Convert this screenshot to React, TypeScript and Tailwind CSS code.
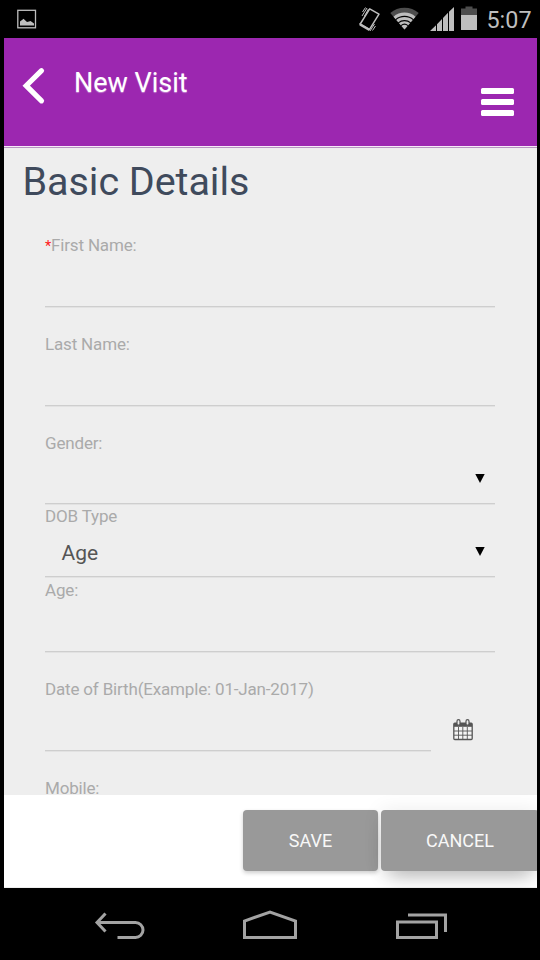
import type { ReactNode } from "react";

function StatusBar() {
  return (
    <div className="flex h-[38px] w-full bg-black">
      <svg width="540" height="38" viewBox="0 0 540 38" fill="#bebebe">
        <rect x="17.800" y="10.300" width="17.700" height="17.500" fill="none" stroke="#bebebe" strokeWidth="1.300" />
        <path d="M20 25.500V21.500l2-1.500 1.500-1.200 3.500 3.200 2-.5 1.500-.5 3.500 2.500v2z" />
        <path d="M369.700 8.800L379 14.200L369.500 29.400L360.200 24z" fill="none" stroke="#bebebe" strokeWidth="1.500" strokeLinejoin="round" />
        <path d="M359.500 23L370 29L369 31L359.500 25.500z" />
        <path d="M362 16l5-8M364.500 16l4-7M362.500 12l3-4.500M370 31l4.500-7M372.500 30.500l3-4.500" stroke="#bebebe" strokeWidth="1" />
        <path d="M390.300 13a21.500 21.500 0 0 1 28.400 0L404.500 29.500z" fill="#4d4d4d" />
        <path d="M393.500 16.800a16.500 16.500 0 0 1 22 0L404.500 29.500z" />
        <path d="M395.500 19.800a13.500 13.500 0 0 1 18 0M398.300 22.900a9.500 9.500 0 0 1 12.400 0M401 25.600a5.500 5.500 0 0 1 7 0" fill="none" stroke="#000" strokeWidth="1.100" />
        <path d="M430 31L436 25.200V31zM437 24.200L442 19V31H437zM443 18l5-5.200V31h-5zM449 11.800L454 7V31h-5z" />
        <path d="M461 8.500h4.500V6.500h7v2H477V15H461z" fill="#4d4d4d" />
        <path d="M461 15h16v15H461z" />
        <text x="486.500" y="28" fontFamily="Roboto, sans-serif" fontSize="24" textLength="45" lengthAdjust="spacingAndGlyphs">5:07</text>
      </svg>
    </div>
  );
}

function Header() {
  return (
    <header className="flex h-[110px] shrink-0 flex-col bg-[#9c27b0]">
      <div className="flex h-[108px]">
        <svg className="mt-[29px] ml-[18px] shrink-0" width="24" height="38" viewBox="0 0 24 38" fill="none" stroke="#fff" strokeWidth="5.200" strokeLinecap="round">
          <path d="M19.500 3.700L4.200 18.700L19.500 33.800" />
        </svg>
        <h1 className="mt-[26.500px] ml-[28px] h-9 text-[27px] leading-9 whitespace-nowrap text-white [text-shadow:0_1px_1px_rgba(255,255,255,0.4)]">New Visit</h1>
        <div className="mt-[50px] mr-[23px] ml-auto flex w-[33px] flex-col gap-[5px]">
          <i className="h-[6px] rounded-[1.500px] bg-white" />
          <i className="h-[6px] rounded-[1.500px] bg-white" />
          <i className="h-[6px] rounded-[1.500px] bg-white" />
        </div>
      </div>
      <div className="h-px bg-[#f5eaf7]" />
      <div className="h-px bg-[#b795c1]" />
    </header>
  );
}

function Field({ size, label, children }: { size: string; label: ReactNode; children?: ReactNode }) {
  return (
    <div className={`flex w-[450px] shrink-0 flex-col border-b border-[#cecece] shadow-[0_1px_0_#e2e2e2] ${size}`}>
      <label className="h-5 text-[17px] leading-5 tracking-[-0.170px] whitespace-nowrap text-[#aaa]">{label}</label>
      {children}
    </div>
  );
}

function Arrow() {
  return (
    <svg className="mr-[10px] ml-auto shrink-0" width="10" height="9" viewBox="0 0 10 9">
      <path d="M.3 0h9.400L5 9z" fill="#000" />
    </svg>
  );
}

function CalendarIcon() {
  return (
    <svg className="mt-[67px] ml-[22px]" width="20" height="22" viewBox="0 0 20 22" fill="none" stroke="#555">
      <rect x=".8" y="4.200" width="18.400" height="16.300" rx="1" strokeWidth="1.300" fill="#f4f4f4" />
      <path d="M1 4h18v3.800H1z" fill="#555" stroke="none" />
      <path d="M5.500 8v12.500M9.800 8v12.500M14.300 8v12.500M1 12h18M1 16.200h18" strokeWidth=".9" />
      <rect x="4" y=".7" width="3" height="5.500" rx="1.500" fill="#eee" strokeWidth="1.200" />
      <rect x="13" y=".7" width="3" height="5.500" rx="1.500" fill="#eee" strokeWidth="1.200" />
    </svg>
  );
}

function NavBar() {
  return (
    <nav className="h-[72px] bg-black">
      <svg width="540" height="72" viewBox="0 888 540 72" fill="none" stroke="#a3a3a3" strokeWidth="3">
        <path d="M97 922.500h38.500a7.500 7.500 0 0 1 0 15h-18" />
        <path d="M105.500 913.500L97 922.500l8.500 9" />
        <path d="M244.500 937.500V921l25.500-9 25.500 9v16.500z" />
        <path d="M397.500 922h39v15.500h-39zM408 915h37.500v17" />
      </svg>
    </nav>
  );
}

export default function App() {
  return (
    <div className="flex h-[960px] w-[540px] flex-col overflow-hidden bg-black font-[Roboto,sans-serif]">
      <StatusBar />
      <main className="mr-[3px] ml-1 flex h-[850px] flex-col overflow-hidden bg-[#eee]">
        <Header />
        <section className="flex h-[647px] shrink-0 flex-col overflow-hidden">
          <h2 className="mt-[10px] ml-[18.500px] h-12 shrink-0 text-[39.500px] leading-[48px] tracking-[-0.050px] whitespace-nowrap text-[#3f4a5c]">Basic Details</h2>
          <form className="mt-[29px] ml-[41px] flex flex-col">
            <Field size="h-[72px]" label={<><span className="text-[14.500px] text-[#ff1a1a]">*</span>First Name:</>} />
            <Field size="h-[99px] pt-[27px]" label="Last Name:" />
            <Field size="h-[98px] pt-[27px]" label="Gender:">
              <div className="mt-[21px] flex"><Arrow /></div>
            </Field>
            <Field size="h-[73px] pt-[2px]" label="DOB Type">
              <div className="mt-3 flex h-[30px]">
                <span className="ml-[16.500px] text-[21px] leading-[30px] text-[#555]">Age</span>
                <span className="mt-[9px] ml-auto"><Arrow /></span>
              </div>
            </Field>
            <Field size="h-[75px] pt-[3px]" label="Age:" />
            <div className="flex h-[99px] shrink-0">
              <div className="flex w-[386px] flex-col border-b border-[#cecece] pt-[27px] shadow-[0_1px_0_#e2e2e2]">
                <label className="h-5 text-[17px] leading-5 tracking-[-0.170px] whitespace-nowrap text-[#aaa]">Date of Birth(Example: 01-Jan-2017)</label>
              </div>
              <CalendarIcon />
            </div>
            <Field size="h-[99px] pt-[27px]" label="Mobile:" />
          </form>
        </section>
        <footer className="flex h-[93px] shrink-0 gap-[3px] border-b border-[#eee] bg-white pt-[15px] pl-[239px]">
          <button className="h-[61px] w-[135px] shrink-0 rounded-[4px] bg-[#999] pb-px text-[18px] text-[#f8f8f8] shadow-[0_2px_4px_rgba(0,0,0,0.2)]">SAVE</button>
          <button className="h-[61px] w-[158px] shrink-0 rounded-[4px] bg-[#999] pb-px text-[18px] text-[#f8f8f8] shadow-[0_12px_20px_-8px_rgba(0,0,0,0.28),0_0_20px_rgba(0,0,0,0.08)]">CANCEL</button>
        </footer>
      </main>
      <NavBar />
    </div>
  );
}
